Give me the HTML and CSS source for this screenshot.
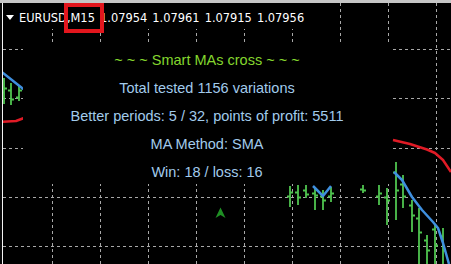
FILE: index.html
```html
<!DOCTYPE html>
<html>
<head>
<meta charset="utf-8">
<link rel="stylesheet" href="styles.css">
</head>
<body>
<div class="window">
  <div class="topstrip"></div>
  <div class="chart">
    <svg class="canvas" width="448" height="261" viewBox="3 3 448 261" xmlns="http://www.w3.org/2000/svg">
      <g class="grid">
        <line x1="52.5" y1="3" x2="52.5" y2="264"/>
        <line x1="100.5" y1="3" x2="100.5" y2="264"/>
        <line x1="148.5" y1="3" x2="148.5" y2="264"/>
        <line x1="196.5" y1="3" x2="196.5" y2="264"/>
        <line x1="244.5" y1="3" x2="244.5" y2="264"/>
        <line x1="292.5" y1="3" x2="292.5" y2="264"/>
        <line x1="340.5" y1="3" x2="340.5" y2="264"/>
        <line x1="388.5" y1="3" x2="388.5" y2="264"/>
        <line x1="436.5" y1="3" x2="436.5" y2="264"/>
        <line x1="3" y1="49.5" x2="451" y2="49.5"/>
        <line x1="3" y1="98.5" x2="451" y2="98.5"/>
        <line x1="3" y1="148.5" x2="451" y2="148.5"/>
        <line x1="3" y1="197.5" x2="451" y2="197.5"/>
        <line x1="3" y1="246.5" x2="451" y2="246.5"/>
      </g>
      <g class="bars">
        <path d="M4 78V104M1 92.5H4M4 88.5H7"/>
        <path d="M11 83V105M8 90.5H11M11 99.5H14"/>
        <path d="M19 86V101M16 97.5H19M19 90.5H22"/>
        <path d="M290 186V207M287 196.5H290M290 192.5H293"/>
        <path d="M298 185V205M295 192.5H298M298 197.5H301"/>
        <path d="M306 185V198M303 190.5H306M306 194.5H309"/>
        <path d="M315 187V210M312 193.5H315M315 195.5H318"/>
        <path d="M323 190V210M320 196.5H323M323 200.5H326"/>
        <path d="M331 187V202M328 196.5H331M331 193.5H334"/>
        <path d="M363 185V193M360 189.5H363M363 190.5H366"/>
        <path d="M379 185V205M376 196.5H379M379 193.5H382"/>
        <path d="M387 188V225M384 197.5H387M387 200.5H390"/>
        <path d="M396 162V220M393 172.5H396M396 190.5H399"/>
        <path d="M403 175V208M400 184.5H403M403 196.5H406"/>
        <path d="M412 200V232M409 205.5H412M412 215.5H415"/>
        <path d="M419 208V264M416 218.5H419M419 232.5H422"/>
        <path d="M427 235V264M424 240.5H427M427 250.5H430"/>
        <path d="M435 224V264M432 229.5H435M435 245.5H438"/>
        <path d="M443 228V264M440 236.5H443M443 250.5H446"/>
      </g>
      <g class="ma-blue">
        <polyline points="0,71 3,73 22,88 30,94"/>
        <polyline points="313,186 323,196 331,186"/>
        <polyline points="394,172 402,180 412,197 422,210 433,222 438,228 443,243 449,264"/>
      </g>
      <g class="ma-red">
        <polyline points="0,122 16,121 24,118"/>
        <polyline points="393,140 410,144 427,149.5 435,153 443,160 451,172"/>
      </g>
      <polygon class="arrow" points="220.5,207.5 225.5,218 220.5,215 215.5,218"/>
    </svg>

    <div class="title">
      <span class="tri"></span>
      <span class="symbol">EURUSD,M15 1.07954 1.07961 1.07915 1.07956</span>
    </div>
    <div class="highlight"></div>

    <div class="panel">
      <div class="line green">~ ~ ~ Smart MAs cross ~ ~ ~</div>
      <div class="line blue">Total tested 1156 variations</div>
      <div class="line blue">Better periods: 5 / 32, points of profit: 5511</div>
      <div class="line blue">MA Method: SMA</div>
      <div class="line blue">Win: 18 / loss: 16</div>
    </div>
  </div>
</div>
</body>
</html>
```

FILE: styles.css
```css
html, body {
  margin: 0;
  padding: 0;
  background: #000;
}
.window {
  width: 451px;
  height: 264px;
  display: flex;
  flex-direction: column;
  background: #0a0a0a;
  overflow: hidden;
}
.topstrip {
  height: 3px;
  background: #c6c6c6;
  flex: none;
}
.chart {
  position: relative;
  flex: 1;
  margin-left: 2px;
  border-left: 1px solid #f4f4f4;
  background: #000;
  overflow: hidden;
}
.canvas {
  display: block;
}
.grid line {
  stroke: #a8a8a8;
  stroke-width: 1;
  stroke-dasharray: 3 3;
}
.bars path {
  stroke: #4fc44f;
  stroke-width: 1.8;
  fill: none;
}
.ma-blue polyline {
  stroke: #3f8fde;
  stroke-width: 2.5;
  fill: none;
  stroke-linejoin: round;
}
.ma-red polyline {
  stroke: #e01b26;
  stroke-width: 2.5;
  fill: none;
  stroke-linejoin: round;
}
.arrow {
  fill: #1f8f24;
}
.title {
  position: absolute;
  left: 0;
  top: 0;
  height: 26px;
  box-sizing: border-box;
  padding: 3px 6px 0 3px;
  display: flex;
  align-items: center;
  gap: 5px;
  background: #000;
  color: #fff;
  font-family: "DejaVu Sans Condensed", "DejaVu Sans", sans-serif;
  font-stretch: condensed;
  font-size: 12.7px;
  line-height: 16px;
  word-spacing: 1.5px;
  white-space: nowrap;
}
.tri {
  width: 0;
  height: 0;
  border-left: 4.5px solid transparent;
  border-right: 4.5px solid transparent;
  border-top: 5px solid #fff;
}
.highlight {
  position: absolute;
  left: 61px;
  top: 0;
  width: 40px;
  height: 30px;
  box-sizing: border-box;
  border: 4px solid #e3161d;
}
.panel {
  position: absolute;
  left: 20px;
  top: 42px;
  width: 368px;
  height: 139px;
  box-sizing: border-box;
  padding-top: 1px;
  background: #000;
  display: flex;
  flex-direction: column;
  align-items: center;
  font-family: "Liberation Sans", Arial, sans-serif;
  font-size: 14.5px;
  line-height: 28px;
  white-space: nowrap;
}
.green {
  color: #84d62e;
}
.blue {
  color: #a2cbec;
}
```
